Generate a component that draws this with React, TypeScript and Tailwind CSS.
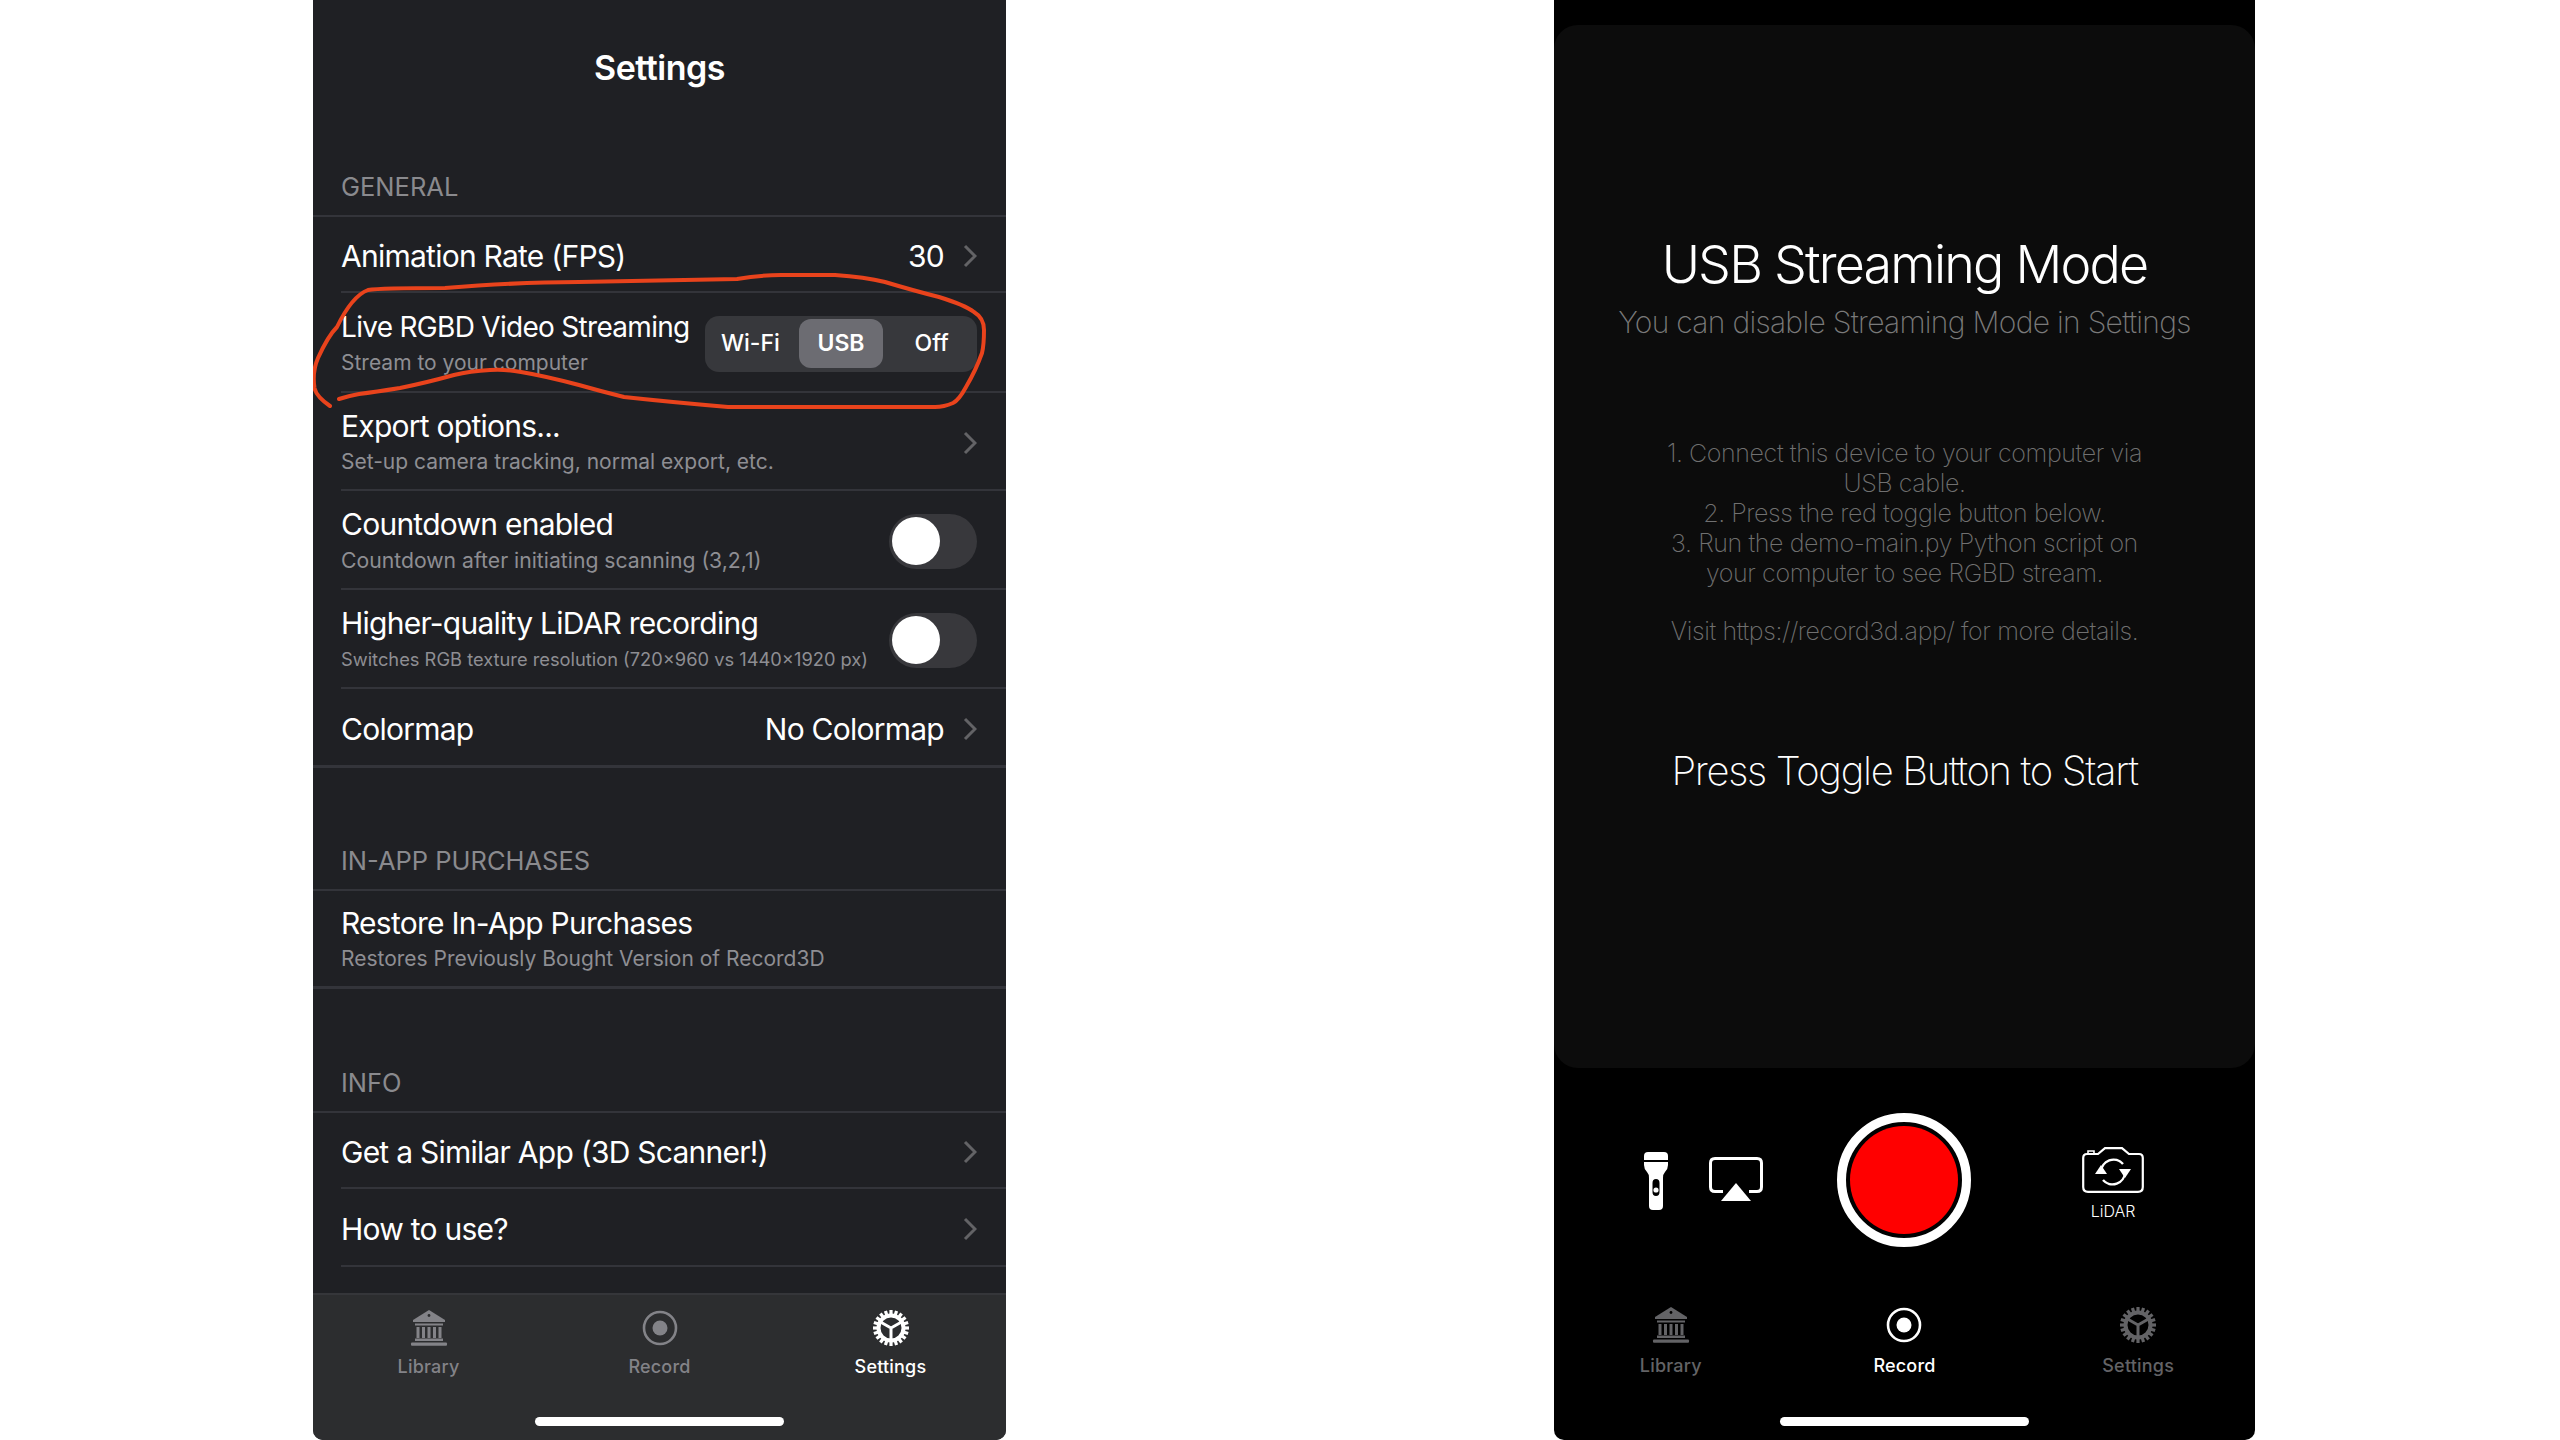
import React from 'react';

const Chevron = () => (
  <svg width="14" height="24" viewBox="0 0 14 24" fill="none" className="shrink-0 mt-[3px]">
    <path d="M2 2 L12 12 L2 22" stroke="#636366" strokeWidth="3" />
  </svg>
);

const LibraryIcon = ({ color, bg }: { color: string; bg: string }) => (
  <svg width="38" height="36" viewBox="0 0 38 36" fill={color}>
    <path d="M19 0 L35 10 L35 12 L3 12 L3 10 Z" />
    <circle cx="19" cy="5.5" r="1.4" fill={bg} />
    <rect x="5" y="13.5" width="28" height="2" />
    <rect x="6.5" y="17" width="3" height="11" />
    <rect x="12" y="17" width="3" height="11" />
    <rect x="17.5" y="17" width="3" height="11" />
    <rect x="23" y="17" width="3" height="11" />
    <rect x="28.5" y="17" width="3" height="11" />
    <rect x="5" y="28.5" width="28" height="2.5" />
    <rect x="1" y="32.5" width="36" height="3.2" rx="1" />
  </svg>
);

const RecordIcon = ({ color }: { color: string }) => (
  <svg width="36" height="36" viewBox="0 0 36 36">
    <circle cx="18" cy="18" r="16" fill="none" stroke={color} strokeWidth="2.6" />
    <circle cx="18" cy="18" r="7.5" fill={color} />
  </svg>
);

const GearIcon = ({ color }: { color: string }) => {
  const teeth = Array.from({ length: 20 }, (_, i) => i * 18);
  return (
    <svg width="38" height="38" viewBox="0 0 38 38">
      {teeth.map((a) => (
        <rect key={a} x="17.4" y="1" width="3.2" height="5" fill={color} transform={`rotate(${a} 19 19)`} />
      ))}
      <circle cx="19" cy="19" r="12.5" fill="none" stroke={color} strokeWidth="4" />
      <path d="M19 19 L8.5 13 M19 19 L29.5 13 M19 19 L19 31" stroke={color} strokeWidth="3" fill="none" />
    </svg>
  );
};

const TabBar = ({ active, muted, label, bg, gap }: { active: string; muted: string; label: string; bg: string; gap: string }) => {
  const tabs = ['Library', 'Record', 'Settings'];
  return (
    <div className="grid grid-cols-3">
      {tabs.map((t) => {
        const color = t === active ? '#ffffff' : muted;
        return (
          <div key={t} className="flex flex-col items-center">
            <div className="h-[38px] flex items-center justify-center">
              {t === 'Library' && <LibraryIcon color={color} bg={bg} />}
              {t === 'Record' && <RecordIcon color={color} />}
              {t === 'Settings' && <GearIcon color={color} />}
            </div>
            <span className={`${gap} text-[18px] leading-[24px] font-medium tracking-[0.2px] ${t === active ? 'text-white' : label}`}>
              {t}
            </span>
          </div>
        );
      })}
    </div>
  );
};

const HomeBar = () => <div className="w-[249px] h-[9px] rounded-full bg-white mx-auto" />;

const Toggle = () => (
  <div className="w-[88px] h-[55px] mt-[3px] rounded-full bg-[#38383c] py-[3.5px] px-[2.5px]">
    <div className="w-[48px] h-[48px] rounded-full bg-white" />
  </div>
);

const SectionHeader = ({ text, className }: { text: string; className: string }) => (
  <div className={`pl-[28px] flex items-end border-b-2 border-[#33343a] text-[25.5px] leading-[30px] text-[#8a8a8e] pb-[13px] ${className}`}>
    {text}
  </div>
);

const Row = ({
  title,
  sub,
  h,
  right,
  subSize,
  last,
}: {
  title: string;
  sub?: string;
  h: string;
  right?: React.ReactNode;
  subSize?: string;
  last?: boolean;
}) => (
  <div className={`flex ${h} ${last ? 'pl-[28px] border-b-3 border-[#33343a]' : 'ml-[28px] border-b-2 border-[#33343a]'} items-center pr-[29px] justify-between`}>
    <div className={`flex flex-col min-w-0 ${sub ? '' : 'pt-[4px]'}`}>
      <span className="text-[30px] leading-[38px] text-white whitespace-nowrap tracking-[-0.75px]">{title}</span>
      {sub && <span className={`${subSize ?? 'text-[21px]'} mt-[3px] leading-[28px] text-[#8e8e93] whitespace-nowrap`}>{sub}</span>}
    </div>
    {right}
  </div>
);

const RowValue = ({ text }: { text: string }) => (
  <div className="flex items-center gap-[19px]">
    <span className="pt-[4px] text-[30px] leading-[38px] tracking-[-0.75px] text-white">{text}</span>
    <Chevron />
  </div>
);

const Scribble = () => (
  <svg className="absolute left-0 top-[260px] w-[693px] h-[160px] pointer-events-none" viewBox="313 260 693 160" fill="none">
    <path
      d="M330 406 Q316 396 314.5 388 Q312 372 318 358 Q328 336 337 327 Q352 296 368 290 Q380 288 445 288 Q520 282 579 282 L737 279 Q760 275 781 275 L835 275 Q865 277 885 282 Q915 291 939 297 Q965 305 974 312 Q984 318 984 330 Q984 345 982 353 Q976 370 966 387 Q959 400 953 403 Q944 407 935 407 L728 407 Q670 402 624 397 Q600 391 579 385 Q545 376 521 372 Q505 369 490 370 Q470 371 454 375 Q425 383 400 388 Q375 392 359 394 Q348 396 339 399"
      stroke="#e9431c"
      strokeWidth="4"
      strokeLinecap="round"
      strokeLinejoin="round"
    />
  </svg>
);

const SettingsPhone = () => (
  <div className="relative w-[693px] h-[1440px] bg-[#1f2024] rounded-b-[10px] overflow-hidden flex flex-col">
    <div className="h-[137px] pt-[48px] text-center text-[34px] leading-[40px] font-semibold tracking-[-0.5px] text-white">Settings</div>
    <SectionHeader text="GENERAL" className="h-[80px]" />
    <Row title="Animation Rate (FPS)" h="h-[76px]" right={<RowValue text="30" />} />
    <div className="flex h-[100px] ml-[28px] border-b-2 border-[#33343a] items-center pr-[29px] justify-between">
      <div className="flex flex-col">
        <span className="text-[28px] leading-[38px] tracking-[-0.7px] text-white whitespace-nowrap">Live RGBD Video Streaming</span>
        <span className="text-[21px] mt-[3px] leading-[28px] text-[#8e8e93] whitespace-nowrap">Stream to your computer</span>
      </div>
      <div className="w-[272px] h-[56px] mt-[3px] rounded-[14px] bg-[#37383c] grid grid-cols-3 gap-[6px] items-center px-[3px] text-[23px] font-medium text-white">
        <span className="text-center">Wi-Fi</span>
        <span className="text-center h-[49px] leading-[49px] rounded-[12px] bg-[#6c6c72] font-semibold">USB</span>
        <span className="text-center">Off</span>
      </div>
    </div>
    <Row title="Export options..." sub="Set-up camera tracking, normal export, etc." h="h-[98px]" right={<Chevron />} />
    <Row title="Countdown enabled" sub="Countdown after initiating scanning (3,2,1)" subSize="text-[21.2px]" h="h-[99px]" right={<Toggle />} />
    <Row title="Higher-quality LiDAR recording" sub="Switches RGB texture resolution (720x960 vs 1440x1920 px)" subSize="text-[18.3px]" h="h-[99px]" right={<Toggle />} />
    <Row title="Colormap" h="h-[79px]" last right={<RowValue text="No Colormap" />} />
    <SectionHeader text="IN-APP PURCHASES" className="h-[123px]" />
    <Row title="Restore In-App Purchases" sub="Restores Previously Bought Version of Record3D" h="h-[98px]" last />
    <SectionHeader text="INFO" className="h-[124px]" />
    <Row title="Get a Similar App (3D Scanner!)" h="h-[76px]" right={<Chevron />} />
    <Row title="How to use?" h="h-[78px]" right={<Chevron />} />
    <div className="flex-1" />
    <div className="h-[147px] bg-[#2c2d2f] border-t-2 border-[#35363a] pt-[14px] flex flex-col">
      <TabBar active="Settings" muted="#838388" label="text-[#838388]" bg="#2c2d2f" gap="mt-[8px]" />
      <div className="mt-[38px]"><HomeBar /></div>
    </div>
    <Scribble />
  </div>
);

const FlashIcon = () => (
  <svg width="24" height="58" viewBox="0 0 24 58" fill="#fff">
    <path fillRule="evenodd" d="M0 10 H24 V13 Q24 17 21 20 Q19 22 19 26 V54 Q19 58 15 58 H9 Q5 58 5 54 V26 Q5 22 3 20 Q0 17 0 13 Z M12 27 Q8.5 27 8.5 31 V40 Q8.5 44 12 44 Q15.5 44 15.5 40 V31 Q15.5 27 12 27 Z" />
    <circle cx="12" cy="38" r="2.6" />
    <path d="M0 8 V4 Q0 0 4 0 H20 Q24 0 24 4 V8 Z" />
  </svg>
);

const AirPlayIcon = () => (
  <svg width="54" height="44" viewBox="0 0 54 44" fill="none">
    <path d="M14 34.5 H6 Q1.5 34.5 1.5 30 V6 Q1.5 1.5 6 1.5 H48 Q52.5 1.5 52.5 6 V30 Q52.5 34.5 48 34.5 H40" stroke="#fff" strokeWidth="3" />
    <path d="M27 26 L42 44 H12 Z" fill="#fff" />
  </svg>
);

const CameraFlipIcon = () => (
  <svg width="62" height="46" viewBox="0 0 62 46" fill="none" stroke="#fff">
    <path d="M5 7 H16 L23 1.2 H40 L47 7 H57 Q60.8 7 60.8 11 V40 Q60.8 44.8 56 44.8 H6 Q1.2 44.8 1.2 40 V11 Q1.2 7 5 7 Z" strokeWidth="2.2" />
    <path d="M6 6 V4 H12 V6" strokeWidth="1.6" />
    <path d="M19 25 A12.5 12.5 0 0 1 41 17" strokeWidth="2.4" />
    <path d="M43 25 A12.5 12.5 0 0 1 21 33" strokeWidth="2.4" />
    <path d="M13 27 L19 18 L25 27 Z" fill="#fff" stroke="none" />
    <path d="M37 22 L49 22 L43 31 Z" fill="#fff" stroke="none" />
  </svg>
);

const RecordPhone = () => (
  <div className="w-[701px] h-[1440px] bg-black rounded-b-[10px] flex flex-col pt-[25px] text-center overflow-hidden">
    <div className="h-[1043px] bg-[#0c0c0c] rounded-[24px] flex flex-col items-center font-light">
      <div className="mt-[208px] text-[52px] leading-[64px] tracking-[-1.8px] text-white whitespace-nowrap">USB Streaming Mode</div>
      <div className="mt-[5px] text-[30px] leading-[40px] tracking-[-0.7px] font-extralight text-[#7a7a7a] whitespace-nowrap">You can disable Streaming Mode in Settings</div>
      <div className="mt-[96px] w-[500px] text-[25px] leading-[30px] tracking-[-0.4px] font-extralight text-[#707070]">
        <p>1. Connect this device to your computer via USB cable.</p>
        <p>2. Press the red toggle button below.</p>
        <p>3. Run the demo-main.py Python script on your computer to see RGBD stream.</p>
        <p className="mt-[28px]">Visit https://record3d.app/ for more details.</p>
      </div>
      <div className="mt-[100px] text-[40px] leading-[50px] tracking-[-1.35px] font-extralight text-white whitespace-nowrap">Press Toggle Button to Start</div>
    </div>
    <div className="h-[238px] flex items-start">
      <div className="w-[90px] shrink-0" />
      <div className="mt-[84px]"><FlashIcon /></div>
      <div className="ml-[41px] mt-[89px]"><AirPlayIcon /></div>
      <div className="ml-[74px] mt-[45px] w-[134px] h-[134px] rounded-full border-[9px] border-white p-[4px] bg-black">
        <div className="w-full h-full rounded-full bg-[#ff0000]" />
      </div>
      <div className="ml-[111px] mt-[79px] flex flex-col items-center">
        <CameraFlipIcon />
        <span className="mt-[8px] text-[16px] leading-[20px] font-light text-white">LiDAR</span>
      </div>
    </div>
    <TabBar active="Record" muted="#636366" label="text-[#636366]" bg="#000000" gap="mt-[10px]" />
    <div className="mt-[39px]"><HomeBar /></div>
  </div>
);

export default function App() {
  return (
    <div className="w-[2560px] h-[1440px] bg-white flex pl-[313px] gap-[548px] overflow-hidden font-['Inter','Liberation_Sans',sans-serif]">
      <SettingsPhone />
      <RecordPhone />
    </div>
  );
}
